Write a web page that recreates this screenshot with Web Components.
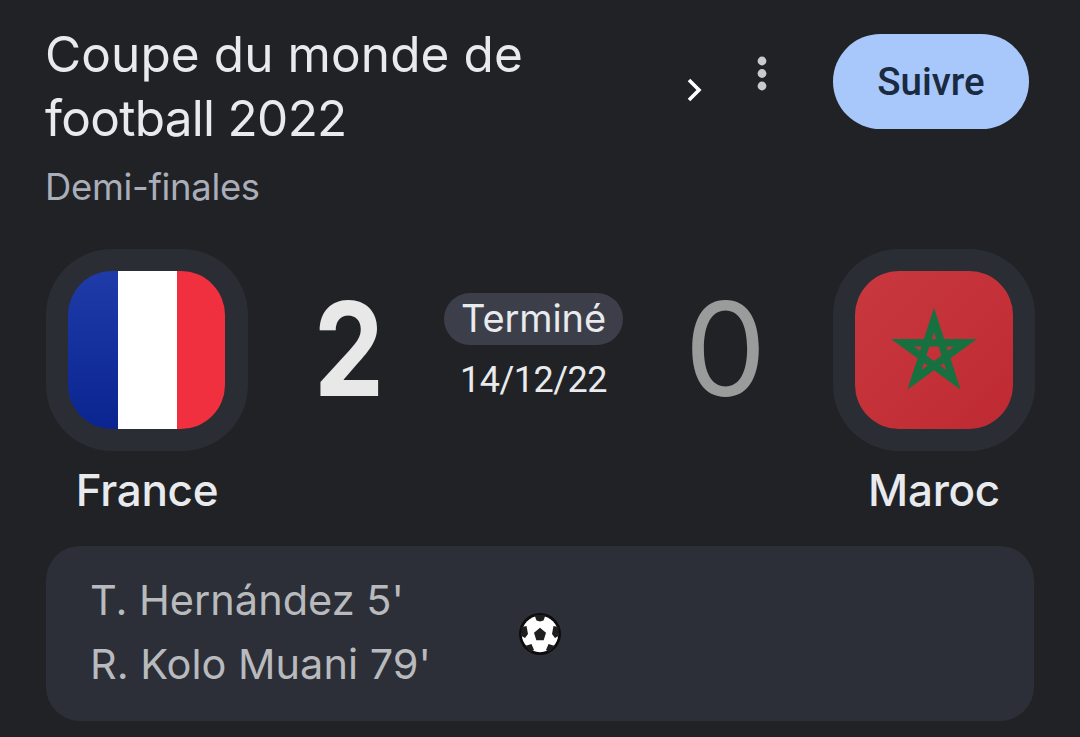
<!DOCTYPE html>
<html lang="fr">
<head>
<meta charset="utf-8">
<title>Coupe du monde</title>
<style>
  html, body { margin: 0; height: 100%; background: #202226; overflow: hidden; }
  body { font-family: Inter, Roboto, "Liberation Sans", sans-serif; }
  match-card { display: block; }
</style>
</head>
<body>
<match-card>
  <match-header>
    <div slot="title">Coupe du monde de</div>
    <div slot="title" style="letter-spacing:-0.7px">football 2022</div>
    <span slot="sub">Demi-finales</span>
  </match-header>
  <score-row>
    <team-badge slot="home" name="France" flag="fr"></team-badge>
    <score-digit slot="homeScore" value="2" winner></score-digit>
    <match-status slot="status" label="Terminé" date="14/12/22"></match-status>
    <score-digit slot="awayScore" value="0"></score-digit>
    <team-badge slot="away" name="Maroc" flag="ma"></team-badge>
  </score-row>
  <scorer-list>
    <div>T. Hernández 5'</div>
    <div>R. Kolo Muani 79'</div>
  </scorer-list>
</match-card>

<script>
class MatchCard extends HTMLElement {
  constructor() {
    super();
    this.attachShadow({ mode: 'open' }).innerHTML = `
      <style>
        :host { display: flex; flex-direction: column; padding: 22px 46px 0; box-sizing: border-box; width: 1080px; }
      </style>
      <slot></slot>`;
  }
}

class MatchHeader extends HTMLElement {
  constructor() {
    super();
    this.attachShadow({ mode: 'open' }).innerHTML = `
      <style>
        :host { display: grid; grid-template-columns: 639px 1fr 196px; height: 227px; padding-right: 5px; }
        .title { font: 400 49.5px/64px Inter, sans-serif; letter-spacing: 0.1px; color: #e9eaee; width: 530px; margin-left: -1px; }
        .sub { font: 400 36.4px/48px Inter, sans-serif; letter-spacing: -0.3px; color: #aaaeb9; margin: 13px 0 0 -1px; }
        .tools { display: flex; justify-content: space-between; padding-top: 34px; height: 40px; width: 83px; }
        .chev { margin-top: 22px; margin-left: 1px; }
        button {
          all: unset; box-sizing: border-box; width: 196px; height: 95px; margin-top: 12px;
          border-radius: 48px; background: #a8c7fa; color: #1a2a40; text-align: center;
          font: 500 38.5px/95px Roboto, sans-serif;
        }
      </style>
      <div>
        <div class="title"><slot name="title"></slot></div>
        <div class="sub"><slot name="sub"></slot></div>
      </div>
      <div class="tools">
        <svg class="chev" width="16" height="24" viewBox="0 0 16 24"><path d="M3 2 L13 12 L3 22" fill="none" stroke="#fff" stroke-width="3.6"/></svg>
        <svg width="12" height="36" viewBox="0 0 12 36"><g fill="#c8cacd"><circle cx="6" cy="5" r="4.4"/><circle cx="6" cy="17.5" r="4.4"/><circle cx="6" cy="30" r="4.4"/></g></svg>
      </div>
      <button>Suivre</button>`;
  }
}

class ScoreRow extends HTMLElement {
  constructor() {
    super();
    this.attachShadow({ mode: 'open' }).innerHTML = `
      <style>
        :host { display: grid; grid-template-columns: 202px 201px 169px 1fr 202px; height: 297px; align-items: start; margin-right: -1px; }
      </style>
      <slot name="home"></slot>
      <slot name="homeScore"></slot>
      <slot name="status"></slot>
      <slot name="awayScore"></slot>
      <slot name="away"></slot>`;
  }
}

const FLAGS = {
  fr: `<svg width="157" height="158" viewBox="0 0 157 158" style="margin-right:1px">
        <defs><clipPath id="c"><rect width="157" height="158" rx="44"/></clipPath>
        <linearGradient id="b" x1="0" y1="0" x2="0" y2="1"><stop offset="0" stop-color="#1e3ba8"/><stop offset="1" stop-color="#0a2590"/></linearGradient></defs>
        <g clip-path="url(#c)">
          <rect width="51" height="158" fill="url(#b)"/>
          <rect x="50" width="60" height="158" fill="#fff"/>
          <rect x="109" width="48" height="158" fill="#f0303f"/>
        </g></svg>`,
  ma: `<svg width="158" height="158" viewBox="0 0 158 158">
        <defs><linearGradient id="r" x1="0" y1="0" x2="1" y2="1"><stop offset="0" stop-color="#c9383f"/><stop offset="1" stop-color="#bf2a32"/></linearGradient></defs>
        <rect width="158" height="158" rx="44" fill="url(#r)"/>
        <path d="M79 49 L98.4 108.7 L47.6 71.8 L110.4 71.8 L59.6 108.7 Z" fill="none" stroke="#17703f" stroke-width="7.5" stroke-miterlimit="5"/>
      </svg>`
};

class TeamBadge extends HTMLElement {
  connectedCallback() {
    const root = this.attachShadow({ mode: 'open' });
    root.innerHTML = `
      <style>
        :host { display: flex; flex-direction: column; align-items: center; width: 202px; }
        .frame { width: 202px; height: 202px; border-radius: 66px; background: #2a2d34; display: flex; align-items: center; justify-content: center; }
        svg { display: block; }
        .name { font: 500 44px/50px Inter, sans-serif; letter-spacing: -0.3px; color: #e8eaed; margin-top: 14px; white-space: nowrap; }
      </style>
      <div class="frame">${FLAGS[this.getAttribute('flag')]}</div>
      <div class="name">${this.getAttribute('name')}</div>`;
  }
}

class ScoreDigit extends HTMLElement {
  connectedCallback() {
    const root = this.attachShadow({ mode: 'open' });
    const win = this.hasAttribute('winner');
    root.innerHTML = `
      <style>
        :host { display: flex; justify-content: center; height: 200px; align-items: center; }
        span { font: ${win ? 700 : 400} 130px/150px Inter, sans-serif; color: ${win ? '#e8e8e8' : '#9a9c9c'}; ${win ? 'transform: scaleX(.86);' : ''} }
      </style>
      <span>${this.getAttribute('value')}</span>`;
  }
}

class MatchStatus extends HTMLElement {
  connectedCallback() {
    const root = this.attachShadow({ mode: 'open' });
    root.innerHTML = `
      <style>
        :host { display: flex; flex-direction: column; align-items: center; padding-top: 44px; }
        .pill { background: #3c3f49; color: #e8eaed; border-radius: 26px; height: 52px; padding: 0 17px; font: 400 38px/50px Inter, sans-serif; letter-spacing: -0.1px; white-space: nowrap; }
        .date { color: #e8eaed; font: 400 36px/44px Roboto, sans-serif; letter-spacing: -0.5px; margin-top: 13px; white-space: nowrap; }
      </style>
      <div class="pill">${this.getAttribute('label')}</div>
      <div class="date">${this.getAttribute('date')}</div>`;
  }
}

class ScorerList extends HTMLElement {
  constructor() {
    super();
    this.attachShadow({ mode: 'open' }).innerHTML = `
      <style>
        :host { display: flex; align-items: center; height: 175px; box-sizing: border-box; padding-left: 44px; border-radius: 34px; background: #2c2f37; }
        .names { font: 400 41.5px/64px Inter, sans-serif; color: #b8babd; white-space: nowrap; width: 429px; margin-top: -4px; }
        svg { display: block; flex: none; }
      </style>
      <div class="names"><slot></slot></div>
      <svg width="42" height="42" viewBox="0 0 42 42">
        <circle cx="21" cy="21" r="21" fill="#0c0c0c"/>
        <circle cx="21" cy="21" r="18.2" fill="#fff"/>
        <path d="M21 14.7 L27 19.7 L24.7 27.3 L17.3 27.3 L15 19.7 Z" fill="#1e1e1e"/>
        <path d="M15.5 2 L26.5 2 L24.5 7.5 L21 8.5 L17.5 7.5 Z M2.5 14 L7.5 13 L9 21 L6 25 L2.5 23 Z M39.5 14 L34.5 13 L33 21 L36 25 L39.5 23 Z M6 33 L12.5 31 L15 37 L12 39 Z M36 33 L29.5 31 L27 37 L30 39 Z" fill="#1e1e1e"/>
      </svg>`;
  }
}

customElements.define('match-card', MatchCard);
customElements.define('match-header', MatchHeader);
customElements.define('score-row', ScoreRow);
customElements.define('team-badge', TeamBadge);
customElements.define('score-digit', ScoreDigit);
customElements.define('match-status', MatchStatus);
customElements.define('scorer-list', ScorerList);
</script>
</body>
</html>
